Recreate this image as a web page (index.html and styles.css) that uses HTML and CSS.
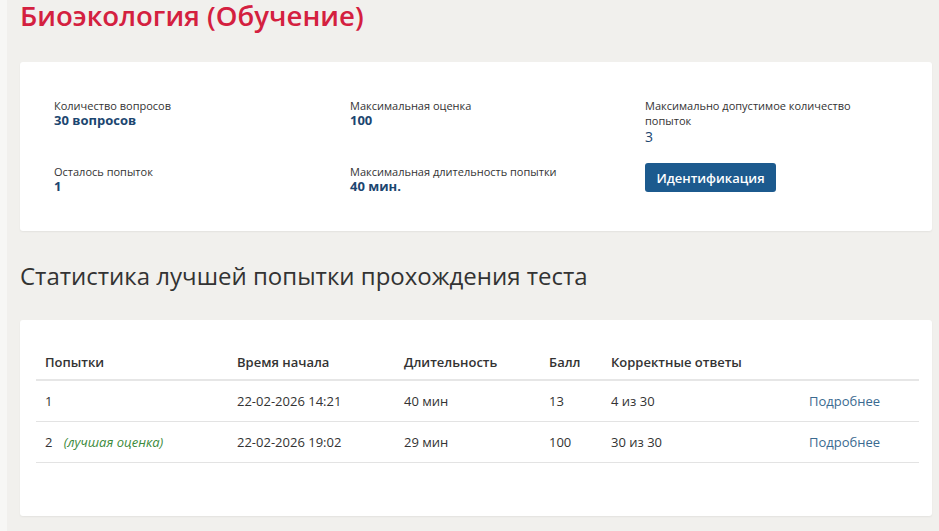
FILE: index.html
```html
<!DOCTYPE html>
<html lang="ru">
<head>
    <meta charset="UTF-8">
    <meta name="viewport" content="width=device-width, initial-scale=1.0">
    <title>Биоэкология (Обучение)</title>
    <link rel="stylesheet" href="styles.css">
</head>
<body>
    <div class="page">
        <h1 class="quiz-title">Биоэкология (Обучение)</h1>

        <div class="card info-card">
            <div class="info-grid">
                <div class="info-item">
                    <div class="info-label">Количество вопросов</div>
                    <div class="info-value">30 вопросов</div>
                </div>
                <div class="info-item">
                    <div class="info-label">Максимальная оценка</div>
                    <div class="info-value">100</div>
                </div>
                <div class="info-item narrow">
                    <div class="info-label">Максимально допустимое количество попыток</div>
                    <div class="info-value">3</div>
                </div>
                <div class="info-item">
                    <div class="info-label">Осталось попыток</div>
                    <div class="info-value">1</div>
                </div>
                <div class="info-item">
                    <div class="info-label">Максимальная длительность попытки</div>
                    <div class="info-value">40 мин.</div>
                </div>
                <div class="info-item">
                    <button class="btn-primary">Идентификация</button>
                </div>
            </div>
        </div>

        <h2 class="section-title">Статистика лучшей попытки прохождения теста</h2>

        <div class="card stats-card">
            <table class="attempts">
                <thead>
                    <tr>
                        <th class="col-attempt">Попытки</th>
                        <th class="col-start">Время начала</th>
                        <th class="col-duration">Длительность</th>
                        <th class="col-score">Балл</th>
                        <th class="col-correct">Корректные ответы</th>
                        <th class="col-link"></th>
                    </tr>
                </thead>
                <tbody>
                    <tr>
                        <td>1</td>
                        <td>22-02-2026 14:21</td>
                        <td>40 мин</td>
                        <td>13</td>
                        <td>4 из 30</td>
                        <td><a href="#" class="details">Подробнее</a></td>
                    </tr>
                    <tr>
                        <td>2 <span class="best">(лучшая оценка)</span></td>
                        <td>22-02-2026 19:02</td>
                        <td>29 мин</td>
                        <td>100</td>
                        <td>30 из 30</td>
                        <td><a href="#" class="details">Подробнее</a></td>
                    </tr>
                </tbody>
            </table>
        </div>
    </div>
</body>
</html>
```

FILE: styles.css
```css
/* Base */
html, body {
    margin: 0;
    padding: 0;
    background: #f1f0ed;
    font-family: "Open Sans", "Liberation Sans", sans-serif;
    color: #333;
}

.page {
    border-left: 7px solid #f7f7f5;
    padding: 0 7px 14px 13px;
    min-height: 531px;
    box-sizing: border-box;
}

/* Headings */
.quiz-title {
    margin: 0;
    padding-top: 0;
    font-size: 27.6px;
    line-height: 30px;
    font-weight: 600;
    color: #d4203f;
}

.section-title {
    margin: 29px 0 28px;
    font-size: 24px;
    line-height: 32px;
    font-weight: 400;
    color: #333;
}

/* Cards */
.card {
    background: #fff;
    border-radius: 3px;
    box-shadow: 0 1px 2px rgba(0, 0, 0, 0.06);
}

.info-card {
    margin-top: 32px;
    padding: 36px 34px 37px;
}

.info-grid {
    display: grid;
    grid-template-columns: 296px 295px 230px;
    row-gap: 19px;
}

.info-label {
    font-size: 11px;
    line-height: 15px;
    color: #333;
}

.info-value {
    font-size: 13px;
    line-height: 15px;
    font-weight: 700;
    color: #1c4670;
}

.narrow .info-value {
    font-weight: 400;
    font-size: 14px;
    line-height: 17px;
}

.btn-primary {
    display: block;
    width: 131px;
    height: 29px;
    margin-top: -1px;
    border: none;
    border-radius: 3px;
    background: #1c5a8e;
    color: #fff;
    font-family: inherit;
    font-size: 13px;
    font-weight: 600;
    cursor: pointer;
}

/* Attempts table */
.stats-card {
    padding: 25px 13px 53px 16px;
}

.attempts {
    width: 100%;
    border-collapse: collapse;
    font-size: 13px;
}

.attempts th {
    text-align: left;
    font-weight: 600;
    line-height: 18px;
    padding: 8px 9px 8px;
    border-bottom: 2px solid #e6e6e6;
}

.attempts td {
    padding: 11px 9px 11px;
    line-height: 18px;
    border-bottom: 1px solid #e3e3e3;
}

.col-attempt { width: 174px; }
.col-start { width: 149px; }
.col-duration { width: 127px; }
.col-score { width: 44px; }
.col-correct { width: 180px; }

.best {
    margin-left: 8px;
    font-size: 13px;
    font-style: italic;
    color: #3b8a3b;
}

.details {
    color: #3a6a90;
    text-decoration: none;
}
```
